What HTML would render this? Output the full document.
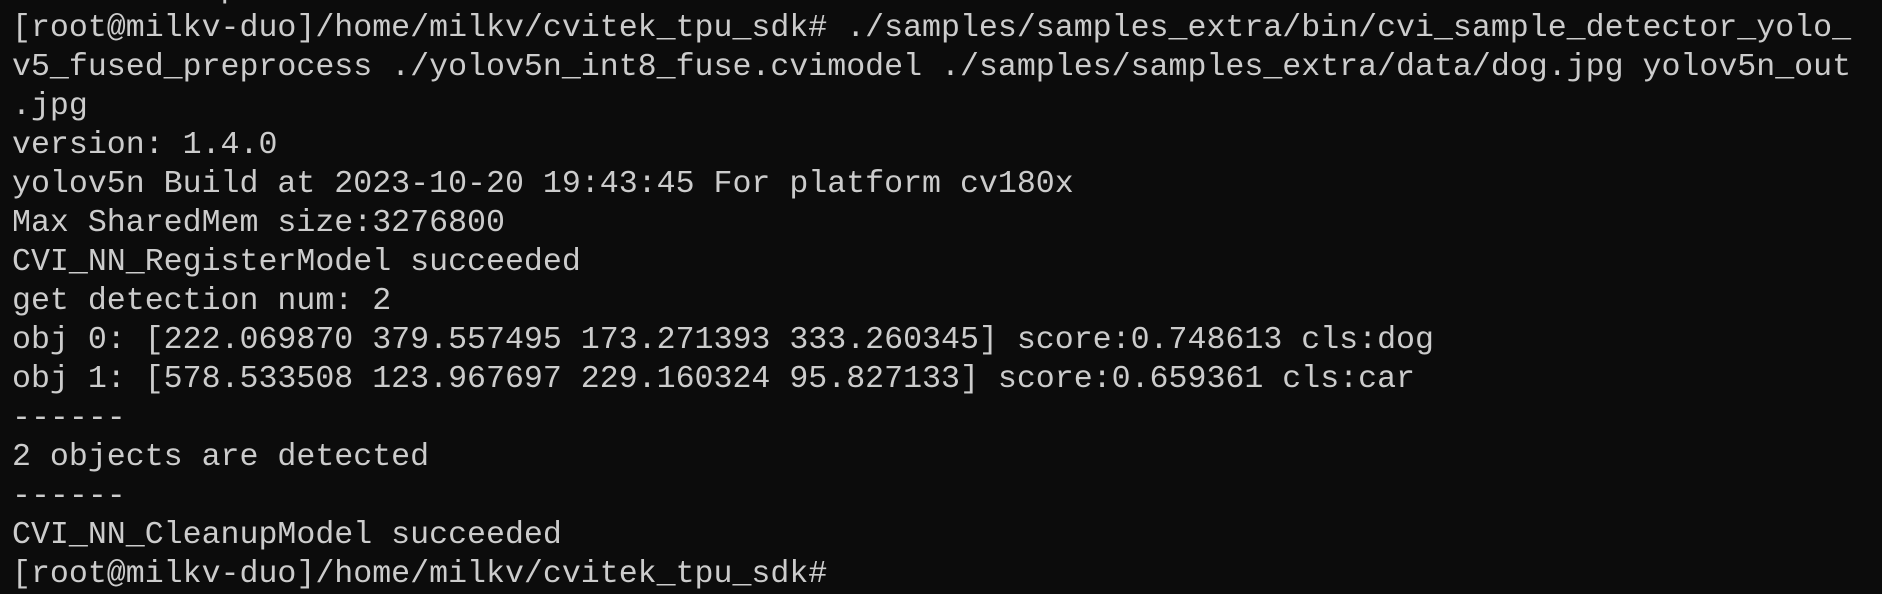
<!DOCTYPE html>
<html><head><meta charset="utf-8"><style>
html,body{margin:0;padding:0;background:#0c0c0c;width:1882px;height:593px;overflow:hidden}
pre{position:absolute;left:12px;top:-30px;margin:0;font-family:"Liberation Mono","DejaVu Sans Mono",monospace;font-size:31.6px;line-height:39px;color:#cccccc;white-space:pre}
</style></head><body>
<pre>           p
[root@milkv-duo]/home/milkv/cvitek_tpu_sdk# ./samples/samples_extra/bin/cvi_sample_detector_yolo_
v5_fused_preprocess ./yolov5n_int8_fuse.cvimodel ./samples/samples_extra/data/dog.jpg yolov5n_out
.jpg
version: 1.4.0
yolov5n Build at 2023-10-20 19:43:45 For platform cv180x
Max SharedMem size:3276800
CVI_NN_RegisterModel succeeded
get detection num: 2
obj 0: [222.069870 379.557495 173.271393 333.260345] score:0.748613 cls:dog
obj 1: [578.533508 123.967697 229.160324 95.827133] score:0.659361 cls:car
------
2 objects are detected
------
CVI_NN_CleanupModel succeeded
[root@milkv-duo]/home/milkv/cvitek_tpu_sdk#</pre>
</body></html>
